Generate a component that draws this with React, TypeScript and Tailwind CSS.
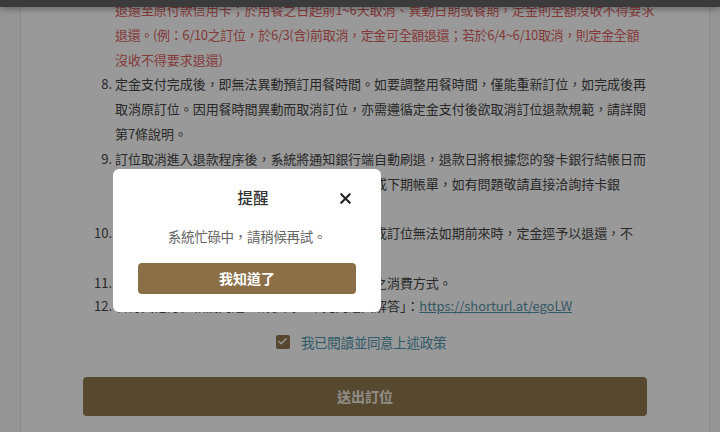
import React from "react";
import { Check, X } from "lucide-react";

const font = { fontFamily: '"Noto Sans CJK TC", "Noto Sans", sans-serif' };

function Item({ n, lines, red }: { n?: string; lines: React.ReactNode[]; red?: boolean }) {
  return (
    <div className="flex">
      <span className="w-[40px] shrink-0 text-right">{n}</span>
      <div className={"pl-[3px] " + (red ? "text-[#dc5f5f]" : "")}>
        {lines.map((l, i) => (
          <div key={i} className="whitespace-nowrap">
            {l}
          </div>
        ))}
      </div>
    </div>
  );
}

export default function App() {
  return (
    <div style={font} className="relative h-[432px] w-[720px] overflow-hidden bg-[#f8f8f8]">
      <div className="relative z-10 h-[7px] bg-[#636363] shadow-[0_2px_6px_rgba(0,0,0,0.35)]" />
      <div className="ml-[20px] h-[600px] w-[690px] border-x border-[#e2e2e2] bg-white">
        <div className="mt-[-9px] pl-[51px] text-[13px] leading-[24.8px] tracking-[-0.05px] text-[#454545]">
          <Item
            red
            lines={[
              "退還至原付款信用卡；於用餐之日起前1~6天取消、異動日期或餐期，定金則全額沒收不得要求",
              <span className="tracking-[-0.35px]">
                退還。(例：6/10之訂位，於6/3(含)前取消，定金可全額退還；若於6/4~6/10取消，則定金全額
              </span>,
              "沒收不得要求退還)",
            ]}
          />
          <Item
            n="8."
            lines={[
              "定金支付完成後，即無法異動預訂用餐時間。如要調整用餐時間，僅能重新訂位，如完成後再",
              "取消原訂位。因用餐時間異動而取消訂位，亦需遵循定金支付後欲取消訂位退款規範，請詳閱",
              "第7條說明。",
            ]}
          />
          <Item
            n="9."
            lines={[
              "訂位取消進入退款程序後，系統將通知銀行端自動刷退，退款日將根據您的發卡銀行結帳日而",
              "定，退款金額將會顯示於您的信用卡本期帳單或下期帳單，如有問題敬請直接洽詢持卡銀",
              "行。",
            ]}
          />
          <Item
            n="10."
            lines={[
              "若因天災或不可抗力因素（如颱風地震等）造成訂位無法如期前來時，定金逕予以退還，不",
              "另收取手續費。",
            ]}
          />
          <div className="leading-[23.5px]">
            <Item n="11." lines={["訂位定金恕不得折抵或轉換為其他非訂位優惠之消費方式。"]} />
            <Item
              n="12."
              lines={[
                <>
                  若有其他訂位相關問題，請參閱「常見問題與解答」：
                  <span className="text-[#5694ac] underline">https://shorturl.at/egoLW</span>
                </>,
              ]}
            />
          </div>
        </div>

        <div className="mt-[14px] flex items-center justify-center gap-[11px] pr-[8px]">
          <span className="flex h-[14px] w-[14px] items-center justify-center rounded-[2px] bg-[#8f7750]">
            <Check size={11} strokeWidth={3} className="text-white" />
          </span>
          <span className="text-[13.5px] leading-[20px] tracking-[-0.3px] text-[#4f98ae]">我已閱讀並同意上述政策</span>
        </div>

        <div className="mx-[62px] mt-[25px] flex h-[39px] items-center justify-center rounded-[4px] bg-[#917b51] text-[14px] font-bold text-[#f2ece0]">
          送出訂位
        </div>
      </div>

      <div className="absolute inset-0 z-20 bg-black/40">
        <div className="absolute left-[113px] top-[169px] w-[268px] rounded-[6px] bg-white px-[25px] pb-[18px] pt-[17px]">
          <div className="relative flex h-[24px] items-center justify-center pl-[12px]">
            <span className="text-[15.5px] font-medium text-[#333]">提醒</span>
            <X size={17} strokeWidth={3} className="absolute right-[2px] top-[4px] text-[#222]" />
          </div>
          <div className="mt-[14px] text-center text-[13.5px] leading-[24px] tracking-[-0.3px] text-[#666]">
            系統忙碌中，請稍候再試。
          </div>
          <div className="mt-[15px] flex h-[31px] items-center justify-center rounded-[4px] bg-[#8b6f47] text-[14px] font-bold text-white">
            我知道了
          </div>
        </div>
      </div>
    </div>
  );
}
